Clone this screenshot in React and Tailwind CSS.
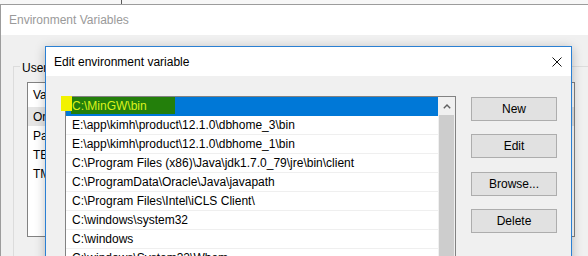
import React from 'react';

const paths = [
  'C:\\MinGW\\bin',
  'E:\\app\\kimh\\product\\12.1.0\\dbhome_3\\bin',
  'E:\\app\\kimh\\product\\12.1.0\\dbhome_1\\bin',
  'C:\\Program Files (x86)\\Java\\jdk1.7.0_79\\jre\\bin\\client',
  'C:\\ProgramData\\Oracle\\Java\\javapath',
  'C:\\Program Files\\Intel\\iCLS Client\\',
  'C:\\windows\\system32',
  'C:\\windows',
  'C:\\windows\\System32\\Wbem',
];

const userVars = ['OneDrive', 'Path', 'TEMP', 'TMP'];

const Button = ({ label, className }) => (
  <button className={`w-[86px] h-[24px] bg-[#e1e1e1] border border-[#adadad] text-[12px] text-black leading-none ${className}`}>
    {label}
  </button>
);

const App = () => {
  return (
    <div className="relative w-[588px] h-[256px] overflow-hidden bg-[#f0f0f0] font-['Liberation_Sans',Arial,sans-serif] text-[12px]">
      {/* strip of the window behind */}
      <div className="flex h-[4px] bg-[#f7f7f7]">
        <div className="w-[121px]" />
        <div className="w-px bg-[#5a5a5a]" />
      </div>

      {/* Environment Variables window (mostly covered) */}
      <div className="flex flex-col h-[252px] border-t border-l border-[#9c9c9c]">
        <div className="h-[30px] shrink-0 bg-white flex items-center pl-[8px] text-[#9a9a9a]">
          Environment Variables
        </div>
        <div className="flex-1 bg-[#f0f0f0] pl-[12px] pt-[31px]">
          <div className="relative w-[620px] h-[300px] border border-[#dcdcdc] pl-[13px] pt-[15px]">
            <span className="absolute -top-[8px] left-[6px] w-[30px] overflow-hidden whitespace-nowrap px-[2px] bg-[#f0f0f0] text-black">
              User variables for kimh
            </span>
            <div className="w-[548px] h-[155px] border border-[#828282] bg-white">
              <div className="h-[24px] flex items-center pl-[5px] text-black">Variable</div>
              {userVars.map((v, i) => (
                <div
                  key={v}
                  className={`h-[19px] flex items-center pl-[5px] text-black ${i === 0 ? 'bg-[#e5e5e5]' : ''}`}
                >
                  {v}
                </div>
              ))}
            </div>
          </div>
        </div>
      </div>

      {/* Edit environment variable dialog */}
      <div className="absolute left-[45px] top-[46px] w-[527px] h-[240px] flex flex-col border border-[#2b80d3] bg-white shadow-[0_2px_10px_rgba(0,0,0,0.25)]">
        <div className="h-[29px] shrink-0 flex items-center justify-between pl-[8px] pr-[9px] text-black">
          <span>Edit environment variable</span>
          <svg width="10" height="10" viewBox="0 0 10 10">
            <path d="M0.5 0.5L9.5 9.5M9.5 0.5L0.5 9.5" stroke="#111" strokeWidth="1" fill="none" />
          </svg>
        </div>
        <div className="flex-1 flex bg-[#f0f0f0] pl-[19px] pt-[20px]">
          <div className="relative w-[391px] h-[200px] border border-[#828282] bg-white flex">
            {/* highlighter mark */}
            <div className="absolute -left-[5px] -top-px w-[11px] h-[15px] bg-[#f2f200]" />
            <div className="w-[372px] flex flex-col">
              {paths.map((p, i) =>
                i === 0 ? (
                  <div key={p} className="h-[19px] shrink-0 bg-[#0078d7] pl-[5px]">
                    <div className="w-[104px] h-[17px] bg-[#237f0b] flex items-center pl-[1px] text-[#dcf21c] leading-none">
                      {p}
                    </div>
                  </div>
                ) : (
                  <div
                    key={p}
                    className="h-[19px] shrink-0 flex items-center pl-[6px] border-b border-[#efefef] text-black whitespace-nowrap"
                  >
                    {p}
                  </div>
                )
              )}
            </div>
            <div className="w-[17px] bg-[#f0f0f0] flex flex-col items-center">
              <div className="h-[18px] flex items-center justify-center">
                <svg width="8" height="5" viewBox="0 0 8 5">
                  <path d="M0.8 4.3L4 1.1L7.2 4.3" stroke="#606060" strokeWidth="1.4" fill="none" />
                </svg>
              </div>
              <div className="w-[15px] flex-1 bg-[#cdcdcd]" />
            </div>
          </div>
          <div className="ml-[15px] pt-px flex flex-col">
            <Button label="New" />
            <Button label="Edit" className="mt-[13px]" />
            <Button label="Browse..." className="mt-[14px]" />
            <Button label="Delete" className="mt-[13px]" />
          </div>
        </div>
      </div>
    </div>
  );
};

export default App;
